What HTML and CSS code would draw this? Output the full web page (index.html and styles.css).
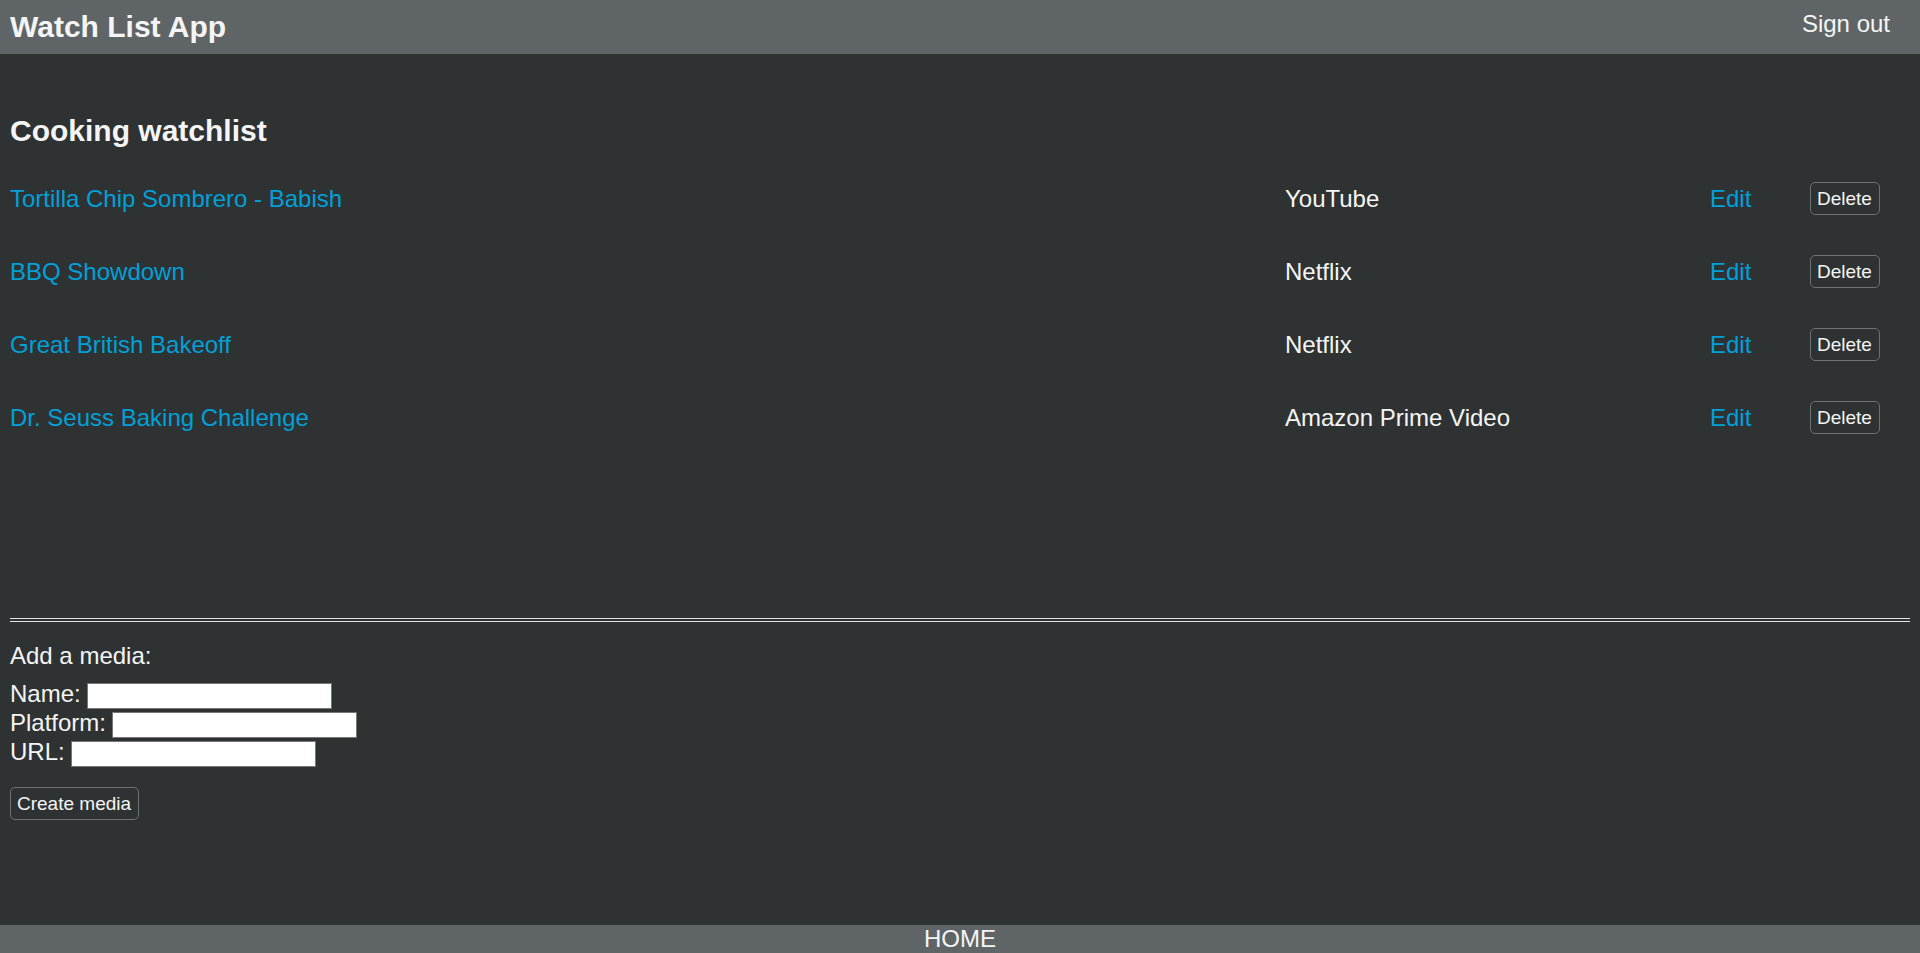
FILE: index.html
```html
<!DOCTYPE html>
<html lang="en">
<head>
<meta charset="utf-8">
<meta name="viewport" content="width=device-width, initial-scale=1">
<title>Watch List App</title>
<link rel="stylesheet" href="styles.css">
</head>
<body>
<header class="site-header">
  <h1 class="title">Watch List App</h1>
  <a class="sign-out" href="#">Sign out</a>
</header>
<main class="content">
  <h2 class="title">Cooking watchlist</h2>
  <table class="media-list">
    <tbody>
      <tr class="media-row">
        <td><a class="link" href="#">Tortilla Chip Sombrero - Babish</a></td>
        <td>YouTube</td>
        <td><a class="link" href="#">Edit</a></td>
        <td><button class="button" type="button">Delete</button></td>
      </tr>
      <tr class="media-row">
        <td><a class="link" href="#">BBQ Showdown</a></td>
        <td>Netflix</td>
        <td><a class="link" href="#">Edit</a></td>
        <td><button class="button" type="button">Delete</button></td>
      </tr>
      <tr class="media-row">
        <td><a class="link" href="#">Great British Bakeoff</a></td>
        <td>Netflix</td>
        <td><a class="link" href="#">Edit</a></td>
        <td><button class="button" type="button">Delete</button></td>
      </tr>
      <tr class="media-row">
        <td><a class="link" href="#">Dr. Seuss Baking Challenge</a></td>
        <td>Amazon Prime Video</td>
        <td><a class="link" href="#">Edit</a></td>
        <td><button class="button" type="button">Delete</button></td>
      </tr>
    </tbody>
  </table>
  <hr class="divider">
  <form class="media-form">
    <p class="form-title">Add a media:</p>
    <div class="field"><label for="name">Name:</label><input class="text-box" id="name" type="text"></div>
    <div class="field"><label for="platform">Platform:</label><input class="text-box" id="platform" type="text"></div>
    <div class="field"><label for="url">URL:</label><input class="text-box" id="url" type="text"></div>
    <button class="button submit" type="submit">Create media</button>
  </form>
</main>
<footer class="site-footer"><a class="home" href="#">HOME</a></footer>
</body>
</html>
```
FILE: styles.css
```css
* {
  box-sizing: border-box;
}

body {
  margin: 0;
  min-height: 100vh;
  display: flex;
  flex-direction: column;
  background: #2e3233;
  color: whitesmoke;
  font-family: "Liberation Sans", Arial, sans-serif;
  font-size: 24px;
  line-height: 28px;
}

a {
  color: inherit;
  text-decoration: none;
}

.site-header {
  display: flex;
  justify-content: space-between;
  align-items: flex-start;
  padding: 10px 30px 10px 10px;
  background: #5f6567;
}

.title {
  margin: 0;
  font-size: 30px;
  line-height: 34px;
}

.content {
  flex: 1;
  padding: 60px 10px;
}

.media-list,
.media-list tbody {
  display: block;
}

.media-list {
  margin-top: 14px;
}

.media-row {
  display: grid;
  grid-template-columns: 3fr 1fr 100px 100px;
  align-items: center;
  height: 73px;
}

.media-row td {
  display: flex;
  align-items: center;
  padding: 0;
}

.link {
  color: #00a0d8;
}

.button {
  padding: 5px 7px 5px 6px;
  border: 1px solid #6c7173;
  border-radius: 5px;
  background: transparent;
  color: inherit;
  font-family: inherit;
  font-size: 19px;
  line-height: 21px;
}

.divider {
  height: 4px;
  margin: 164px 0 20px;
  border: solid #e3e3e3;
  border-width: 1px 0;
}

.form-title {
  margin: 0 0 10px;
}

.field {
  display: flex;
  gap: 6px;
  height: 29px;
}

.text-box {
  width: 245px;
  height: 26px;
  margin-top: 3px;
  padding: 1px 2px;
  border: 1px solid #767676;
  background: #fff;
  font-family: inherit;
  font-size: 19px;
}

.submit {
  margin-top: 20px;
}

.site-footer {
  background: #5f6567;
  text-align: center;
}
```
